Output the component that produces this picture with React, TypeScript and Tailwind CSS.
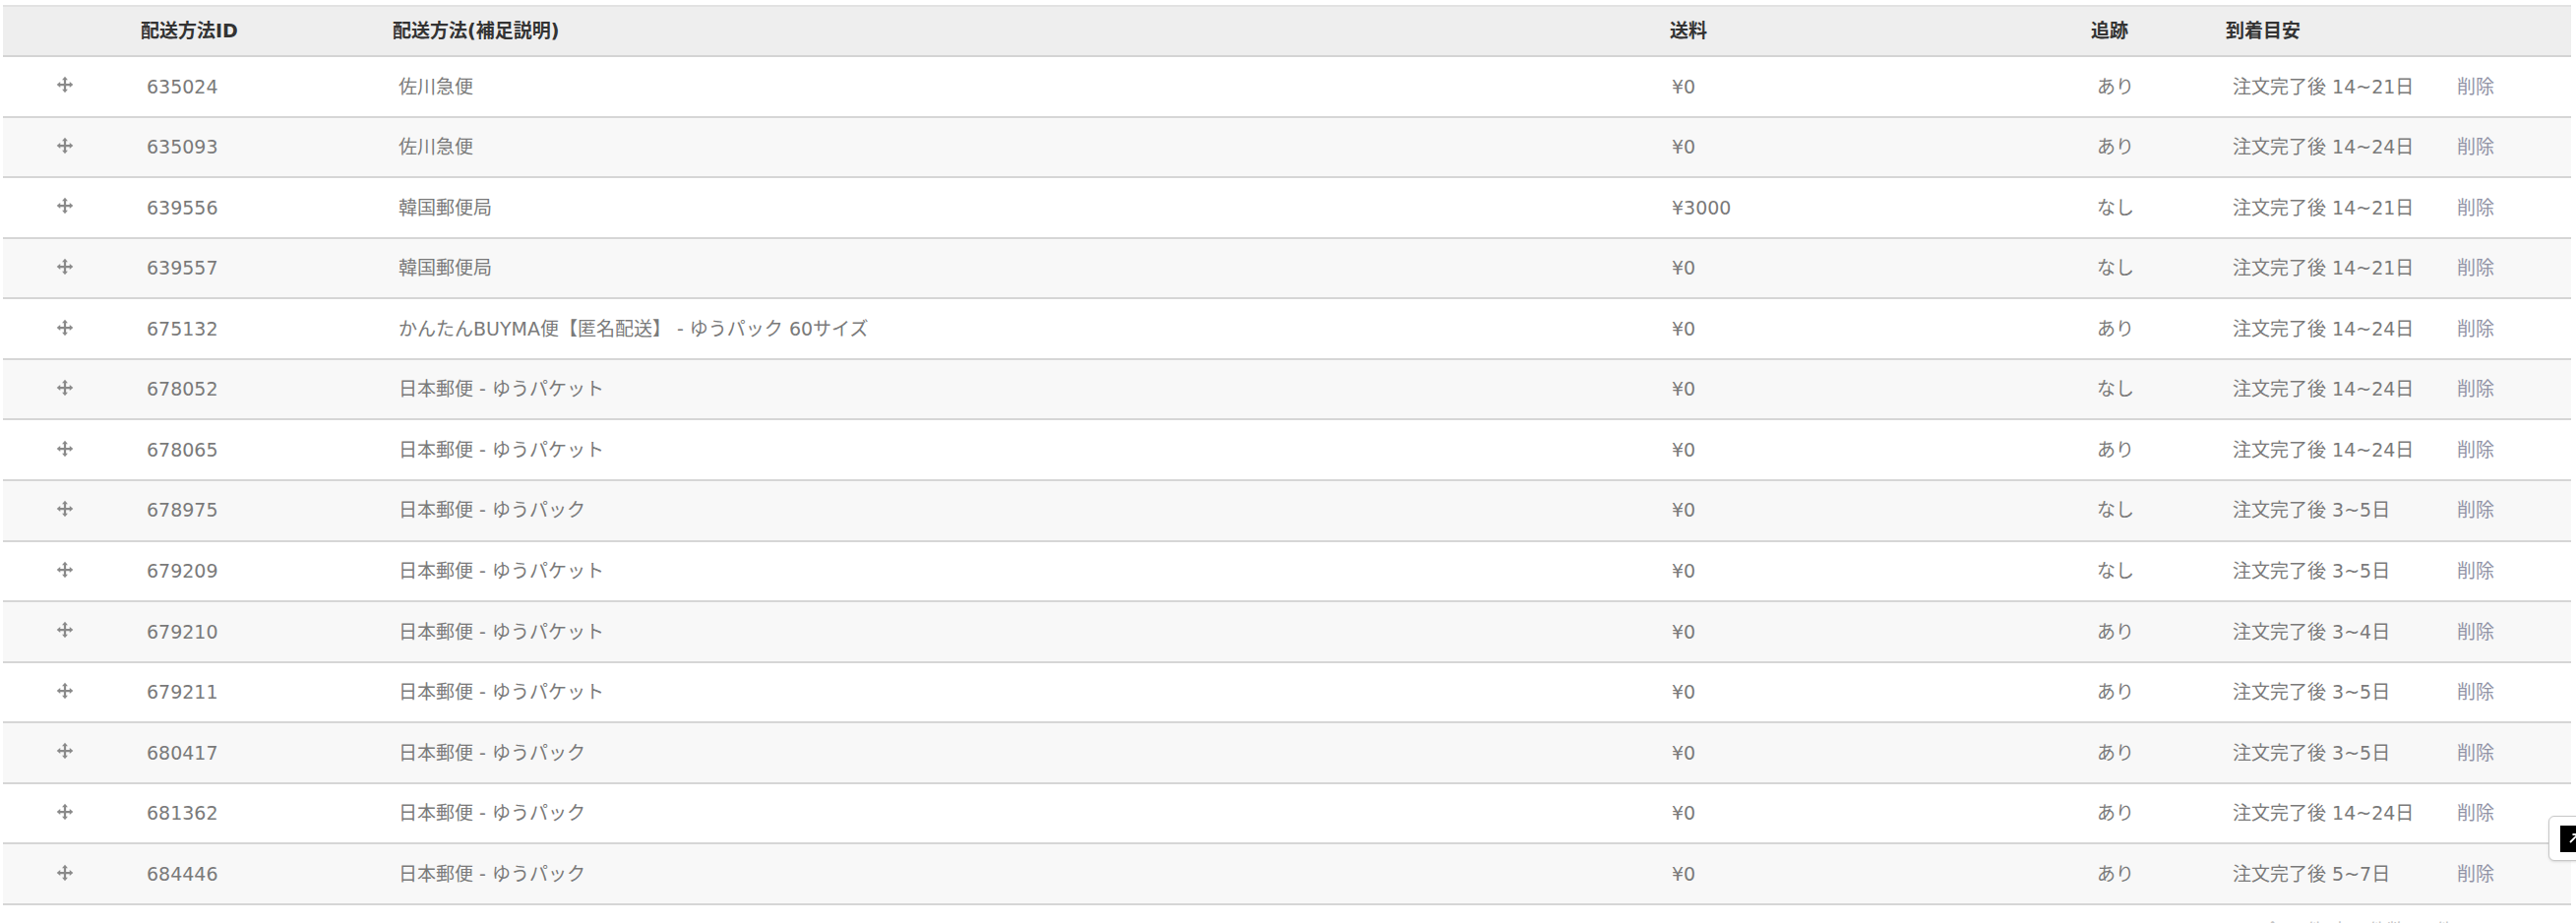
import React from 'react';

type Row = {
  id: string;
  method: string;
  fee: string;
  tracking: string;
  arrival: string;
};

const rows: Row[] = [
  { id: '635024', method: '佐川急便', fee: '¥0', tracking: 'あり', arrival: '注文完了後 14~21日' },
  { id: '635093', method: '佐川急便', fee: '¥0', tracking: 'あり', arrival: '注文完了後 14~24日' },
  { id: '639556', method: '韓国郵便局', fee: '¥3000', tracking: 'なし', arrival: '注文完了後 14~21日' },
  { id: '639557', method: '韓国郵便局', fee: '¥0', tracking: 'なし', arrival: '注文完了後 14~21日' },
  { id: '675132', method: 'かんたんBUYMA便【匿名配送】 - ゆうパック 60サイズ', fee: '¥0', tracking: 'あり', arrival: '注文完了後 14~24日' },
  { id: '678052', method: '日本郵便 - ゆうパケット', fee: '¥0', tracking: 'なし', arrival: '注文完了後 14~24日' },
  { id: '678065', method: '日本郵便 - ゆうパケット', fee: '¥0', tracking: 'あり', arrival: '注文完了後 14~24日' },
  { id: '678975', method: '日本郵便 - ゆうパック', fee: '¥0', tracking: 'なし', arrival: '注文完了後 3~5日' },
  { id: '679209', method: '日本郵便 - ゆうパケット', fee: '¥0', tracking: 'なし', arrival: '注文完了後 3~5日' },
  { id: '679210', method: '日本郵便 - ゆうパケット', fee: '¥0', tracking: 'あり', arrival: '注文完了後 3~4日' },
  { id: '679211', method: '日本郵便 - ゆうパケット', fee: '¥0', tracking: 'あり', arrival: '注文完了後 3~5日' },
  { id: '680417', method: '日本郵便 - ゆうパック', fee: '¥0', tracking: 'あり', arrival: '注文完了後 3~5日' },
  { id: '681362', method: '日本郵便 - ゆうパック', fee: '¥0', tracking: 'あり', arrival: '注文完了後 14~24日' },
  { id: '684446', method: '日本郵便 - ゆうパック', fee: '¥0', tracking: 'あり', arrival: '注文完了後 5~7日' },
];

const gridCols = 'grid grid-cols-[137px_256px_1298px_428px_137px_231px_123px] items-center';

function DragIcon() {
  return (
    <svg width="18" height="18" viewBox="0 0 16 16" className="text-[#8a8a8a]">
      <path d="M8 3v10M3 8h10" stroke="currentColor" strokeWidth="2" />
      <path d="M8 0.6 L10.6 3.8 H5.4 Z" fill="currentColor" />
      <path d="M8 15.4 L10.6 12.2 H5.4 Z" fill="currentColor" />
      <path d="M0.6 8 L3.8 5.4 V10.6 Z" fill="currentColor" />
      <path d="M15.4 8 L12.2 5.4 V10.6 Z" fill="currentColor" />
    </svg>
  );
}

export default function App() {
  return (
    <div
      className="relative h-[938px] overflow-hidden bg-white pt-[5px]"
      style={{ fontFamily: '"DejaVu Sans", "Noto Sans CJK JP", sans-serif' }}
    >
      <div className="ml-[3px] w-[2610px]">
        <div className={`${gridCols} h-[53px] border-t-2 border-b-2 border-t-[#e2e2e2] border-b-[#d4d4d4] bg-[#eeeeee] text-[19px] font-bold text-[#333]`}>
          <div />
          <div className="pl-[3px]">配送方法ID</div>
          <div className="pl-[3px]">配送方法(補足説明)</div>
          <div className="pl-[3px]">送料</div>
          <div className="pl-[3px]">追跡</div>
          <div className="pl-[3px]">到着目安</div>
          <div />
        </div>
        {rows.map((r, i) => (
          <div
            key={r.id}
            className={`${gridCols} h-[61.57px] border-b-2 border-[#d6d6d6] text-[19px] text-[#7a7a7a] ${i % 2 === 0 ? 'bg-white' : 'bg-[#f8f8f8]'}`}
          >
            <div className="flex justify-center pr-[11px] pb-[3px]">
              <DragIcon />
            </div>
            <div className="pl-[9px]">{r.id}</div>
            <div className="pl-[9px]">{r.method}</div>
            <div className="pl-[5px]">{r.fee}</div>
            <div className="pl-[9px]">{r.tracking}</div>
            <div className="pl-[10px]">{r.arrival}</div>
            <div className="pl-[7px] text-[#9193a6]">削除</div>
          </div>
        ))}
        <div className="mt-[12px] pr-[8px] text-right text-[19px] text-[#c4c4c4]">
          全14件 表示件数 50件 ページ 1 / 1
        </div>
      </div>
      <div className="absolute left-[2590px] top-[829px] flex h-[46px] w-[50px] items-center rounded-md border border-[#c8c8c8] bg-white pl-[11px] shadow-sm">
        <div className="flex h-[27px] w-[27px] items-center justify-center bg-black">
          <svg width="14" height="14" viewBox="0 0 14 14">
            <path d="M3 11 L11 3 M5.5 3 H11 V8.5" stroke="white" strokeWidth="1.8" fill="none" />
          </svg>
        </div>
      </div>
    </div>
  );
}
